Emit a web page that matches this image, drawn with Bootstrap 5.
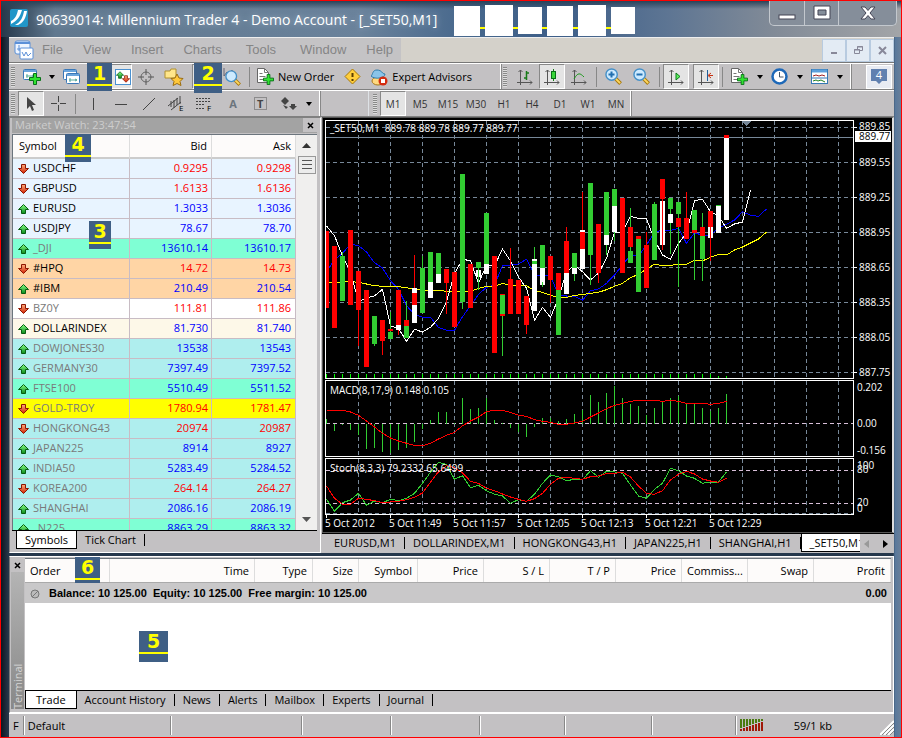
<!DOCTYPE html>
<html lang="en">
<head>
<meta charset="utf-8">
<meta name="viewport" content="width=device-width, initial-scale=1">
<title>Millennium Trader 4</title>
<link href="https://cdn.jsdelivr.net/npm/bootstrap@5.3.0/dist/css/bootstrap.min.css" rel="stylesheet">
<style>
:root{--face:#c3c1c3;--hi:#fff;--lo:#808080}
body{font:11px/16px "Open Sans","Noto Sans",sans-serif;color:#000;background:#14202e}
button{font:inherit;color:inherit;background:none;border:0;padding:0}
button svg{display:block;flex:none}
.shell{height:100vh;min-height:600px;border:1px solid red;padding:0 7px 0 8px;background:linear-gradient(90deg,#0f1620 0,#26384c 8px,#26384c calc(100% - 8px),#58789c calc(100% - 6px),#6a7f98 100%)}
.titlebar{height:36px;margin:0 -7px 0 -8px;padding-left:9px;background:linear-gradient(180deg,#2b4258 0,transparent 8px),linear-gradient(90deg,#26384a 0,#60788f 6%,#6a829b 40%,#46678c 52%,#3d5e88 62%,#5d7593 74%,#828b97 86%,#a3a5a8 100%)}
.caption-text{font-size:14px;line-height:22px;color:#fff;text-shadow:0 0 6px #9fb4c8}
.redacted{gap:5px;margin-left:17px;background:linear-gradient(#ff0,#ff0) 0 22px/100% 2px no-repeat}
.redacted span{background:#fff;width:26px;height:30px}
.redacted span:nth-child(3),.redacted span:nth-child(6){width:24px;height:27px}
.redacted span:nth-child(2),.redacted span:nth-child(5){width:28px;height:31px}
.win-btns{border:1px solid #c3c8ce;border-top:0;border-radius:0 0 5px 5px;height:25px;overflow:hidden;background:#858e9a}
.win-btns button{width:34px;display:flex;align-items:center;justify-content:center}
.win-btns button+button{border-left:1px solid #c3c8ce}
.win-btns button:last-child{width:58px}
.menus{height:26px;background:#d4d1ca;border-top:1px solid #eee;border-bottom:1px solid #777}
.menus nav{font:13px/24px "Liberation Sans",Arial,sans-serif;background:#c4c3c5;padding-left:5px}
.menus nav a{color:#858585;text-decoration:none}
.mdi button{width:24px;height:23px;background:#e3ebf4;border:1px solid #b8cbe0;display:flex;align-items:center;justify-content:center}
.tools{background:var(--face);border-top:1px solid var(--hi);border-bottom:1px solid var(--lo)}
.tool-group{border-right:1px solid var(--hi);box-shadow:1px 0 #888}
.tool-group button{height:25px;min-width:28px;display:flex;align-items:center;justify-content:center;flex:none}
.tool-group .drop{min-width:12px}
.tool-group .drop::after{content:"";border:3px solid transparent;border-top:4px solid #000;border-bottom:0}
.pressed{background:#e4e4e4;border:1px solid;border-color:#888 #fff #fff #888}
.tool-group .pressed{min-width:26px}
.tool-group .wide{padding-left:14px}
.grip{width:4px;height:20px;margin:0 3px 0 2px;background:repeating-linear-gradient(#888 0 1px,#ddd 1px 2px)}
.vsep{width:1px;height:20px;background:#888;margin:0 3px}
.frames button{font-size:10px;color:#333}
.feedback{width:26px;height:24px;background:#e8ebf2;border:1px solid #fff;margin-right:2px}
.main-row{min-height:0;background:var(--face)}
.watch{width:312px;margin-right:1px;border:1px solid var(--lo);border-right-color:#fff;border-bottom-color:#fff;padding:0 3px 3px 2px;background:var(--face)}
.watch-title{height:15px;line-height:14px;background:#a3a3a3;color:#cdcdcd;margin-bottom:1px;padding-left:3px}
.x-btn{height:14px;width:14px;display:flex;align-items:center;justify-content:center;background:var(--face)}
.grid-table{table-layout:fixed;width:100%;border-collapse:separate;border-spacing:0}
.quotes th{height:24px;font-weight:400;background:#fdfbfa;border-bottom:2px solid #ccc;border-right:1px solid #ddd;padding:0 4px 0 6px}
.quotes td{height:20px;line-height:18px;border-bottom:1px solid #c8bcc4;border-right:1px solid #c8bcc4;padding:0 3px 0 5px;white-space:nowrap;background:var(--row)}
.quotes td:last-child{padding-right:4px}
.down{color:red}.up{color:#00f}
.scroller{width:21px;flex:none;background:#f0efee}
.thumb{width:18px;height:18px;border:1px solid #999;background:#ececec;display:flex;align-items:center;justify-content:center}
.tabs-row{border-top:1px solid #000;background:var(--face)}
.tabs-row button{height:18px;padding-left:8px;display:flex;align-items:center;white-space:nowrap;flex:none}
.tabs-row button::after{content:"";height:12px;border-right:1px solid #000;margin-left:8px}
.tabs-row .current{background:#fff;border:1px solid #000;border-top:0;padding:0 8px}
.tabs-row .current::after{display:none}
.terminal .current{padding:0 10px}
.chart-box{background:#000;border:1px solid #555;border-right:2px solid #ddd;min-height:0}
.chart-box svg{display:block;width:100%;height:100%;shape-rendering:crispEdges}
.chart-box text{fill:#fff;font:10px "Open Sans","Noto Sans",sans-serif}
.chart-tabs{height:20px}
.chart-tabs .current{border-right:0;padding-right:0}
.terminal{border:1px solid var(--lo);border-color:#fff #fff #fff #777;background:var(--face);margin-top:3px;height:157px;padding:1px 2px 3px 0}
.side{width:15px}
.side-label{background:linear-gradient(#888,#b4b4b4);color:#d4d4d4;writing-mode:vertical-rl;transform:rotate(180deg);line-height:13px;width:13px;margin:0 1px 0}
.orders th{height:23px;font-weight:400;text-align:right;background:#fdfbfa;border-right:1px solid #ddd;padding:0 5px;white-space:nowrap}
.orders td{height:21px;background:#c9c8c9;border-top:1px solid #aaa;font:700 11px/16px "Liberation Sans",Arial,sans-serif;padding:0 4px 0 5px}
.statusbar{height:24px;background:var(--face);border-top:1px solid #fff;line-height:22px}
.statusbar>div{border-left:1px solid #888;box-shadow:inset 1px 0 #fff;padding-left:4px;height:19px;line-height:19px}
.marker{position:absolute;z-index:3;background:#3f5f85;color:#ff0;font:700 19px/21px "DejaVu Sans",sans-serif;text-align:center;width:25px;height:28px}
.marker::after{content:"";display:block;height:2px;background:#ff0}
.m1{left:78px;top:-1px}.m2{left:185px;top:-1px;width:28px;height:30px}
.m3{left:79px;top:103px;width:22px}.m4{left:55px;top:16px;width:26px}
.m5{left:114px;top:73px;width:29px;height:31px}.m6{left:50px;top:-1px;height:26px}
</style>
<script src="https://cdn.jsdelivr.net/npm/bootstrap@5.3.0/dist/js/bootstrap.bundle.min.js"></script>
</head>
<body>
<svg width="0" height="0" class="position-absolute" aria-hidden="true"><defs>
<linearGradient id="gg" x2="0" y2="1"><stop stop-color="#8f8"/><stop offset="1" stop-color="#0a8a1a"/></linearGradient>
<linearGradient id="gr" x2="0" y2="1"><stop stop-color="#ffb080"/><stop offset="1" stop-color="#d02000"/></linearGradient>
<symbol id="plus" viewBox="0 0 12 12"><path d="M4.500.500h3v4h4v3h-4v4h-3v-4h-4v-3h4z" fill="#2fe32f" stroke="#087018"/></symbol>
<symbol id="win" viewBox="0 0 14 11"><rect x=".5" y=".5" width="13" height="10" rx="1" fill="#fff" stroke="#3a78b8"/><path d="M1 2h12" stroke="#6aa5dc" stroke-width="2"/><path d="M3 7h8M4 5v4M9 6l2 1-2 1" stroke="#5a9" fill="none"/></symbol>
<symbol id="page" viewBox="0 0 12 15"><path d="M.5.5h7l4 4v10H.5z" fill="#fff" stroke="#666"/><path d="M7.500.500v4h4M2.500 5.500h3M2.500 8.500h6M2.500 11.500h5" stroke="#777" fill="none"/></symbol>
<symbol id="axes" viewBox="0 0 16 16"><path d="M3.500 1v15M0 13.500h15M1.500 3l2-2 2 2M13 11.500l2 2-2 2" stroke="#555" fill="none"/></symbol>
<symbol id="lens" viewBox="0 0 18 18"><path d="M11 11l5.500 5.500" stroke="#a87a10" stroke-width="4"/><path d="M11 11l5 5" stroke="#ffd860" stroke-width="2"/><circle cx="7" cy="7" r="6" fill="#cdeaff" stroke="#4590c8" stroke-width="1.500"/></symbol>
<symbol id="aup" viewBox="0 0 11 10"><path d="M5.500.500L10.500 5.500H7.500v4h-4v-4H.5z" fill="url(#gg)" stroke="#075c10"/></symbol>
<symbol id="adn" viewBox="0 0 11 10"><path d="M5.500 9.500L.5 4.500h3V.500h4v4h3z" fill="url(#gr)" stroke="#8c1400"/></symbol>
</defs></svg>

<div class="shell d-flex flex-column overflow-hidden">
<header class="titlebar d-flex align-items-start flex-shrink-0">
  <svg width="18" height="18" class="mt-2" viewBox="0 0 18 18"><rect width="18" height="18" rx="2" fill="#2196c8"/><path d="M1 12C5 10 7 6 8 1h4C10 8 7 12 1 15zM5 16c6-3 8-8 9-14h3c-1 7-4 12-9 14z" fill="#fff"/></svg>
  <div class="caption-text ms-2 mt-2">90639014: Millennium Trader 4 - Demo Account - [_SET50,M1]</div>
  <div class="redacted d-flex align-items-center mt-1"><span></span><span></span><span></span><span></span><span></span><span></span></div>
  <div class="win-btns d-flex ms-auto me-1">
    <button aria-label="Minimize"><svg width="18" height="16"><rect x="1" y="10" width="16" height="4" fill="#fff" stroke="#445"/></svg></button>
    <button aria-label="Maximize"><svg width="18" height="16"><path d="M1 1h16v13H1zM5 5v5h8V5z" fill="#fff" fill-rule="evenodd" stroke="#445"/></svg></button>
    <button aria-label="Close"><svg width="16" height="14"><path d="M1 1h4l3 3.500L11 1h4l-5 6 5 6h-4L8 9.500 5 13H1l5-6z" fill="#fff" stroke="#445"/></svg></button>
  </div>
</header>

<div class="menus d-flex align-items-center justify-content-between flex-shrink-0">
  <nav class="d-flex align-items-center">
    <svg width="20" height="20" viewBox="0 0 20 20"><rect x="1" y="1" width="15" height="13" rx="2" fill="#eef5ff" stroke="#5b90d8"/><path d="M1 3h15" stroke="#5b90d8" stroke-width="2"/><rect x="6" y="8" width="13" height="11" rx="1" fill="#fff" stroke="#5b90d8"/><path d="M3 9h3M5 5v6M8 12l2 4 2-4 2 4 3-3" fill="none" stroke="#5b90d8"/></svg>
    <a href="#" class="ms-2 me-3">File</a><a href="#" class="mx-1">View</a><a href="#" class="mx-3">Insert</a><a href="#" class="mx-1">Charts</a><a href="#" class="mx-3 px-1">Tools</a><a href="#" class="mx-1">Window</a><a href="#" class="ms-3 me-2">Help</a>
  </nav>
  <div class="mdi d-flex gap-0"><button aria-label="Minimize chart"><svg width="9" height="9"><path d="M1 7h6" stroke="#889" stroke-width="2"/></svg></button><button aria-label="Restore chart"><svg width="9" height="9"><path d="M3.500 3V.500h5v4H6M.500 3.500h5v4h-5zM3 1h6M0 4h6" fill="none" stroke="#889"/></svg></button><button aria-label="Close chart"><svg width="9" height="9"><path d="M1 1l7 7M8 1L1 8" stroke="#889" stroke-width="2"/></svg></button></div>
</div>

<div class="tools d-flex align-items-center flex-shrink-0 position-relative">
  <span class="marker m1">1</span><span class="marker m2">2</span>
  <div class="tool-group d-flex align-items-center pe-4">
    <i class="grip"></i>
    <button aria-label="New chart"><svg width="18" height="16"><use href="#win" width="14" height="11"/><use href="#plus" x="6" y="4" width="12" height="12"/></svg></button><button class="drop" aria-label="New chart list"></button>
    <button aria-label="Profiles"><svg width="18" height="16"><use href="#win" width="14" height="11"/><use href="#win" x="3" y="4" width="14" height="11"/></svg></button>
    <button class="pressed wide ms-1" aria-label="Market Watch"><svg width="26" height="16"><rect x="10.500" y=".5" width="15" height="15" fill="#fff" stroke="#4a90d0"/><use href="#aup" x="11" y="2" width="8" height="8"/><use href="#adn" x="17" y="6" width="8" height="8"/></svg></button>
    <button aria-label="Data window"><svg width="16" height="16"><circle cx="8" cy="8" r="5" fill="none" stroke="#666"/><path d="M8 0v6M8 10v6M0 8h6M10 8h6" stroke="#555"/></svg></button>
    <button aria-label="Navigator"><svg width="20" height="18"><path d="M1 3h5l1-2h5v9H1z" fill="#ffe68a" stroke="#b09030"/><path d="M13 6l2 4 4 .5-3 3 1 4-4-2-4 2 1-4-3-3 4-.5z" fill="#ffc83c" stroke="#9a6c10"/></svg></button>
    <button class="pressed ms-1" aria-label="Terminal"></button>
    <button aria-label="Strategy tester"><svg width="18" height="18"><path d="M1 0v8l3-4 2 4 3-6v7" stroke="#667" fill="none"/><use href="#lens" x="2" y="2" width="16" height="16"/></svg></button>
    <i class="vsep"></i>
    <button class="px-1"><svg width="17" height="17" class="me-1"><use href="#page" width="12" height="15"/><use href="#plus" x="6" y="6" width="11" height="11"/></svg>New Order</button>
    <button aria-label="Warnings"><svg width="17" height="17"><path d="M8.500 1L16 8.500 8.500 16 1 8.500z" fill="#ffce3c" stroke="#a87808"/><path d="M8.500 5v4M8.500 11v2" stroke="#5a3c00" stroke-width="2"/></svg></button>
    <button class="px-1"><svg width="18" height="18" class="me-1"><ellipse cx="8" cy="13" rx="6" ry="4" fill="#ffd980" stroke="#a87818"/><path d="M1 8c2-1 1-6 6-6s5 4 8 4c0 4-10 6-14 2z" fill="#8ac4e8" stroke="#2f7cac"/><circle cx="13" cy="13" r="4.500" fill="#d42c10"/><rect x="11" y="11" width="4" height="4" fill="#fff"/></svg>Expert Advisors</button>
  </div>
  <div class="tool-group d-flex align-items-center pe-1">
    <i class="grip me-1"></i>
    <button aria-label="Bar chart"><svg width="16" height="16"><use href="#axes" width="16" height="16"/><path d="M9.500 2v9M7 9h2M10 4h2" stroke="#177a17" stroke-width="1.500"/></svg></button>
    <button class="pressed" aria-label="Candlesticks"><svg width="16" height="16"><use href="#axes" width="16" height="16"/><path d="M9.500 0v12" stroke="#177a17"/><rect x="7.500" y="2.500" width="4" height="7" fill="#3ad63a" stroke="#087018"/></svg></button>
    <button aria-label="Line chart"><svg width="16" height="16"><use href="#axes" width="16" height="16"/><path d="M3 10c4-7 6-6 10-2" fill="none" stroke="#1c9a1c"/></svg></button>
    <i class="vsep"></i>
    <button aria-label="Zoom in"><svg width="17" height="17"><use href="#lens" width="17" height="17"/><path d="M3.500 6.500h6M6.500 3.500v6" stroke="#2270b0" stroke-width="2"/></svg></button>
    <button aria-label="Zoom out"><svg width="17" height="17"><use href="#lens" width="17" height="17"/><path d="M3.500 6.500h6" stroke="#2270b0" stroke-width="2"/></svg></button>
    <i class="vsep"></i>
    <button class="pressed me-1" aria-label="Auto scroll"><svg width="16" height="16"><use href="#axes" width="16" height="16"/><path d="M8 4l4 3.500L8 11z" fill="#5cf05c" stroke="#0a7a1a"/></svg></button><button class="pressed" aria-label="Chart shift"><svg width="16" height="16"><use href="#axes" width="16" height="16"/><path d="M9.500 1v11" stroke="#1f5f9a"/><path d="M15 6.500h-4M13 4l-3 2.500L13 9" stroke="#c83010" fill="none"/></svg></button>
    <i class="vsep"></i>
    <button aria-label="Indicators"><svg width="17" height="17"><use href="#page" width="12" height="15"/><use href="#plus" x="6" y="6" width="11" height="11"/></svg></button><button class="drop" aria-label="Indicator list"></button>
    <button aria-label="Periods"><svg width="17" height="17"><circle cx="8.500" cy="8.500" r="7" fill="#fff" stroke="#1d68b8" stroke-width="2.500"/><path d="M8.500 4v5h4" fill="none" stroke="#456"/></svg></button><button class="drop" aria-label="Period list"></button>
    <button aria-label="Templates"><svg width="17" height="15"><rect x=".5" y=".5" width="16" height="14" fill="#fff" stroke="#3478b4"/><path d="M1 2h15" stroke="#5ba0dc" stroke-width="3"/><path d="M2 7l3-1 3 1 3-1 3 1" stroke="#a02020" fill="none"/><path d="M1 9h15" stroke="#3478b4"/><path d="M2 12l3-1 2 1 3-1 4 2" stroke="#208020" fill="none"/></svg></button><button class="drop" aria-label="Template list"></button>
  </div>
  <button class="feedback ms-auto d-flex align-items-center justify-content-center" aria-label="4 messages"><svg width="18" height="17"><path d="M1 1h16v12h-5l-3 3-3-3H1z" fill="#6080b0"/><text x="9" y="11" text-anchor="middle" fill="#fff" font-size="11">4</text></svg></button>
</div>

<div class="tools d-flex align-items-center flex-shrink-0">
  <div class="tool-group d-flex align-items-center">
    <i class="grip"></i>
    <button class="pressed" aria-label="Cursor"><svg width="12" height="16"><path d="M2 1v12l3-3 2 5 2-1-2-5h4z" fill="#444"/></svg></button>
    <button aria-label="Crosshair"><svg width="15" height="15"><path d="M7.500 0v6M7.500 9v6M0 7.500h6M9 7.500h6" stroke="#444"/></svg></button>
    <i class="vsep"></i>
    <button aria-label="Vertical line"><svg width="14" height="14"><path d="M7.500 1v12" stroke="#444"/></svg></button>
    <button aria-label="Horizontal line"><svg width="14" height="14"><path d="M1 7.500h12" stroke="#444"/></svg></button>
    <button aria-label="Trendline"><svg width="14" height="14"><path d="M1 13L13 1" stroke="#444"/></svg></button>
    <button aria-label="Channel"><svg width="18" height="20"><path d="M0 12L10 4M3 16l10-8M3 7v6M6 6v8M9 4v7M12 2v8" stroke="#444" fill="none"/><text x="11" y="17" font-size="8">E</text></svg></button>
    <button aria-label="Fibonacci"><svg width="18" height="20"><path d="M0 4.500h15M0 7.500h15M0 10.500h9M0 14.500h9" stroke="#444" stroke-dasharray="2 1"/><text x="11" y="17" font-size="8">F</text></svg></button>
    <button aria-label="Text" class="text-secondary"><b>A</b></button>
    <button aria-label="Text label"><svg width="14" height="14"><rect x=".5" y=".5" width="12" height="12" fill="none" stroke="#555" stroke-dasharray="1 1"/><text x="3" y="11" font-weight="700" font-size="11" fill="#444">T</text></svg></button>
    <button aria-label="Arrows"><svg width="16" height="14"><path d="M4 0l4 4-4 4-4-4zM12 13L8 9h2V7h4v2h2zM2 8l3 4 2-2" fill="#444"/></svg></button>
    <button class="drop me-1" aria-label="Arrow list"></button>
  </div>
  <div class="tool-group frames d-flex align-items-center ms-5 border-start">
    <i class="grip ms-1"></i>
    <button class="pressed">M1</button><button>M5</button><button>M15</button><button>M30</button><button>H1</button><button>H4</button><button>D1</button><button>W1</button><button>MN</button>
  </div>
</div>

<main class="main-row d-flex flex-grow-1">
  <section class="watch d-flex flex-column position-relative flex-shrink-0">
    <span class="marker m4">4</span><span class="marker m3">3</span>
    <div class="watch-title d-flex justify-content-between"><span>Market Watch: 23:47:54</span><button class="x-btn" aria-label="Close Market Watch"><svg width="7" height="7"><path d="M1 1l5 5M6 1L1 6" stroke="#000" stroke-width="1.500"/></svg></button></div>
    <div class="d-flex flex-grow-1 overflow-hidden border border-secondary border-end-0 border-bottom-0">
      <div class="flex-grow-1"><table class="grid-table quotes"><colgroup><col><col width="82"><col width="84"></colgroup><thead><tr><th>Symbol</th><th class="text-end">Bid</th><th class="text-end">Ask</th></tr></thead><tbody id="quotes"></tbody></table></div>
      <div class="scroller d-flex flex-column align-items-center"><svg width="9" height="5" class="mt-2 mb-1"><path d="M0 5l4.500-5L9 5z" fill="#333"/></svg><div class="thumb mt-1"><svg width="10" height="10"><path d="M0 .5h10M0 4.500h10M0 8.500h10" stroke="#555"/></svg></div><svg width="9" height="5" class="mt-auto mb-2"><path d="M0 0h9L4.500 5z" fill="#555"/></svg></div>
    </div>
    <div class="tabs-row d-flex ps-1"><button class="current">Symbols</button><button>Tick Chart</button></div>
  </section>
  <section class="d-flex flex-column flex-grow-1 overflow-hidden">
    <div class="chart-box flex-grow-1"><svg id="chart" role="img" aria-label="_SET50,M1 chart"></svg></div>
    <div class="tabs-row chart-tabs d-flex ps-1"><button>EURUSD,M1</button><button>DOLLARINDEX,M1</button><button>HONGKONG43,H1</button><button>JAPAN225,H1</button><button>SHANGHAI,H1</button><button class="current flex-shrink-1 flex-grow-1 overflow-hidden">_SET50,M1</button><span class="d-flex gap-1 px-1 align-items-center"><svg width="6" height="8"><path d="M5 0v8L0 4z" fill="#999"/></svg><svg width="16" height="8"><path d="M9 0v8l5-4z" fill="#000"/></svg></span></div>
  </section>
</main>

<section class="terminal d-flex flex-shrink-0">
  <div class="side d-flex flex-column"><button class="x-btn" aria-label="Close Terminal"><svg width="7" height="7"><path d="M1 1l5 5M6 1L1 6" stroke="#000" stroke-width="1.500"/></svg></button><div class="side-label flex-grow-1">Terminal</div></div>
  <div class="flex-grow-1 d-flex flex-column position-relative">
    <span class="marker m6">6</span><span class="marker m5">5</span>
    <div class="flex-grow-1 bg-white border-top border-secondary">
      <table class="grid-table orders"><colgroup><col width="85"><col><col width="58"><col width="46"><col width="59"><col width="66"><col width="66"><col width="66"><col width="66"><col width="66"><col width="66"><col width="77"></colgroup>
      <thead><tr><th class="text-start">Order</th><th>Time</th><th>Type</th><th>Size</th><th>Symbol</th><th>Price</th><th>S / L</th><th>T / P</th><th>Price</th><th>Commiss...</th><th>Swap</th><th>Profit</th></tr></thead>
      <tbody><tr><td colspan="11"><svg width="11" height="11" class="me-2"><circle cx="5" cy="5" r="4" fill="#bbb" stroke="#777"/><path d="M2 8l6-6" stroke="#777"/></svg>Balance: 10 125.00&nbsp; Equity: 10 125.00&nbsp; Free margin: 10 125.00</td><td class="text-end">0.00</td></tr></tbody></table>
    </div>
    <div class="tabs-row d-flex"><button class="current">Trade</button><button>Account History</button><button>News</button><button>Alerts</button><button>Mailbox</button><button>Experts</button><button>Journal</button></div>
  </div>
</section>

<footer class="statusbar d-flex align-items-center flex-shrink-0">
  <span class="px-1">F</span>
  <div style="width:147px">Default</div><div style="width:131px"></div><div style="width:89px"></div><div style="width:89px"></div><div style="width:85px"></div><div style="width:87px"></div><div style="width:84px"></div>
  <div class="flex-grow-1 d-flex align-items-center"><svg width="24" height="13" id="meter"></svg><span class="ms-auto me-5">59/1 kb</span><svg width="14" height="18" class="align-self-end"><path d="M0 18L14 4M4 18L14 8M8 18l6-6" stroke="#fff" stroke-width="2"/><path d="M2 18L14 6M6 18l8-8M10 18l4-4" stroke="#888"/></svg></div>
</footer>
</div>

<script>
const C={b:'#e8f4ff',t:'#7fffd4',o:'#ffd5a5',w:'#fff',c:'#fdf8e8',a:'#afeeee',y:'#ff0'};
const Q=`USDCHF 0.9295 0.9298 d b 1
GBPUSD 1.6133 1.6136 d b 1
EURUSD 1.3033 1.3036 u b 1
USDJPY 78.67 78.70 u b 1
_DJI 13610.14 13610.17 u t 0
#HPQ 14.72 14.73 d o 1
#IBM 210.49 210.54 u o 1
BZ0Y 111.81 111.86 d w 0
DOLLARINDEX 81.730 81.740 u c 1
DOWJONES30 13538 13543 u a 0
GERMANY30 7397.49 7397.52 u a 0
FTSE100 5510.49 5511.52 u t 0
GOLD-TROY 1780.94 1781.47 d y 0
HONGKONG43 20974 20987 d a 0
JAPAN225 8914 8927 u a 0
INDIA50 5283.49 5284.52 u a 0
KOREA200 264.14 264.27 d a 0
SHANGHAI 2086.16 2086.19 u a 0
_N225 8863.29 8863.32 u t 0`;
document.getElementById('quotes').innerHTML=Q.split('\n').map(r=>{const[s,b,a,d,c,k]=r.split(' ');const n=d=='d'?'down':'up';
return `<tr style="--row:${C[c]}"><td style="color:${k=='1'?'#000':'#7a7a7a'}"><svg width="11" height="10" class="me-1"><use href="#${d=='d'?'adn':'aup'}"/></svg>${s}</td><td class="text-end ${n}">${b}</td><td class="text-end ${n}">${a}</td></tr>`}).join('');

const X=i=>326.5+8*i, P=v=>115+v/3, S=v=>375+v/3;
const line=(a,f,c)=>`<polyline fill="none" stroke="${c}" points="${a.map((v,i)=>X(i)+','+f(v).toFixed(1)).join(' ')}"/>`;
const seg=(x1,y1,x2,y2,c,d)=>`<path d="M${x1} ${y1}L${x2} ${y2}" stroke="${c}"${d?` stroke-dasharray="${d}"`:''}/>`;
const txt=(x,y,s,c)=>`<text x="${x}" y="${y}"${c?` style="fill:${c}"`:''}>${s}</text>`;
const K={R:'red',G:'#32cd32',W:'#fff'};
/* Candle parts by colour and span; lower-case letters are wicks. */
const candles=`R348-578|R393-639|g411-558 G423-558|R345-570|r585-693 R468-585|R525-756|g603-693 G603-687|r615-720 R615-678|g591-651 R642-648 G651-672|r525-660 R525-630 W630-645|g558-669 R615-633 G633-669|r420-520 W519-534 R534-570 W570-624|g423-594 G459-594|G411-501 W501-549|G414-477 W477-504|r462-597 R462-504|R471-636|g177-582 G177-561|R447-579|G441-459 W465-486 g441-525|G294-447 W447-477|R423-714|g537-723 R537-603 G540-597|r399-597 R492-597|R495-597|r543-657 R543-630|g396-432 W432-588 G438-447|G390-459 W459-510 g500-516|r423-564 R423-495|R474-525 G525-660|r336-474 R378-474 W474-537|g414-498 G414-459 W459-477|r231-345 W345-351 R351-402 W402-462|g204-510 G204-420|r327-504 R327-474|g231-420 G231-360 W360-390|g222-378 G222-273 W273-351|R249-474|g279-444 R336-396 G408-444|R363-372 G372-531|r351-519 R390-519|g261-435 G267-435|R192-252 W258-390 r252-405|g249-417 G249-282 W297-324|g261-516 G261-297 R309-336|r231-372 R309-372|g285-495 G285-345 R345-354|g294-498 R336-363 G363-432|R288-336 W336-369 r336-438|G270-273 W273-354|R60-69 W69-315`.split('|');
const white=[333,362,423,470,560,548,543,523,633,640,679,643,651,637,610,560,475,433,437,505,450,453,402,438,486,520,616,577,607,550,470,450,470,495,474,430,351,351,304,310,311,375,420,433,385,355,257,253,290,302,340,327,321,226];
const blue=[470,435,415,387,392,411,443,459,497,523,572,597,607,607,637,646,646,605,573,538,517,510,452,450,447,433,480,480,483,540,543,543,556,527,522,505,480,450,420,423,390,352,345,346,340,385,354,360,360,340,328,315,290,301,304,282];
const yellow=[503,503,500,500,502,507,512,514,514,515,518,522,525,526,526,529,529,530,529,520,514,514,505,511,511,512,527,532,541,547,547,541,539,535,532,524,514,505,488,478,462,448,452,451,448,448,436,438,427,418,420,405,396,384,372,351];
const hist=[132,168,150,165,180,222,219,231,233,225,219,201,163,135,111,111,145,69,102,99,69,135,145,159,171,186,156,129,129,138,132,117,105,60,81,54,33,69,87,93,120,99,81,69,63,87,87,99,108,99,57];
const signal=[106,106,106,111,121,138,156,175,189,198,205,211,212,205,192,181,172,152,138,126,110,106,106,112,121,124,134,139,142,148,148,144,139,126,114,101,91,85,79,76,76,76,79,76,79,85,85,85,88,85,79];
const stK=[373,409,383,375,355,391,378,383,373,377,370,355,325,292,262,268,313,302,338,331,347,358,363,385,374,379,358,325,300,305,317,313,314,287,307,289,291,295,330,363,370,343,325,280,287,303,310,325,321,321,291];
const stD=[333,370,388,388,370,373,377,383,381,379,374,367,354,322,290,272,278,294,319,325,340,347,357,366,373,379,371,355,328,310,307,310,313,305,303,296,295,292,306,333,355,358,347,315,298,289,297,312,318,322,310];
let o='<defs><clipPath id="cp"><rect x="326" y="118" width="528" height="400"/></clipPath></defs><g transform="translate(-323 -118)"><g clip-path="url(#cp)">';
for(let k=0;k<16;k++){const x=358.5+32*k;[[121,378],[381,456],[459,514]].forEach(([a,b])=>o+=seg(x,a,x,b,'#778899','4 3'));}
for(let k=0;k<8;k++)o+=seg(326,127.5+35*k,853,127.5+35*k,'#778899','4 3');
o+=seg(326,137.5,853,137.5,'#778899');
o+=seg(326,423.5,853,423.5,'#d8bfd8','4 3')+seg(326,470.5,853,470.5,'#d8bfd8','4 3')+seg(326,503.5,853,503.5,'#d8bfd8','4 3')+seg(326,513.5,853,513.5,'#778899','4 3');
o+='<path d="M741 121h10l-5 5z" fill="#778899"/>';
o+=line(blue,P,'#00f')+line(yellow,P,'#ff0')+line(white,P,'#fff');
candles.forEach((c,i)=>{c.split(' ').forEach(p=>{const u=p[0].toUpperCase(),w=u==p[0]?5:1,[a,b]=p.slice(1).split('-').map(Number);o+=`<rect x="${X(i)-w/2}" y="${P(a)}" width="${w}" height="${(b-a)/3}" fill="${K[u]}"/>`});
o+=seg(X(i),i>48?376:374,X(i),378,'#0f0');o+=seg(X(i),423.5,X(i),S(hist[i]),'#32cd32')});
o+=line(signal,S,'red')+line(stK,S,'#32cd32')+line(stD,S,'red')+'</g>';
[[120,378],[380,456],[458,514]].forEach(([a,b])=>o+=`<rect x="325.500" y="${a+.5}" width="528" height="${b-a}" fill="none" stroke="#fff"/>`);
['889.85','889.55','889.25','888.95','888.65','888.35','888.05','887.75'].forEach((s,k)=>{o+=seg(853,127.5+35*k,857,127.5+35*k,'#fff')+txt(859,(k?131:130)+35*k,s)});
o+='<rect x="855" y="131" width="36" height="11" fill="#fff"/>'+txt(859,140,'889.77','#000');
o+=txt(857,391,'0.202')+txt(857,427,'0.00')+txt(857,454,'-0.156')+txt(857,469,'100')+txt(857,473,'80')+txt(857,506,'20')+txt(857,512,'0');
o+=txt(330,132,'_SET50,M1&#160; 889.78 889.78 889.77 889.77')+txt(330,394,'MACD(8,17,9) 0.148 0.105')+txt(330,472,'Stoch(8,3,3) 79.2332 65.6499');
['5 Oct 2012','5 Oct 11:49','5 Oct 11:57','5 Oct 12:05','5 Oct 12:13','5 Oct 12:21','5 Oct 12:29'].forEach((s,k)=>{o+=seg(326.5+64*k,514,326.5+64*k,518,'#fff')+txt(325+64*k,527,s)});
document.getElementById('chart').innerHTML=o+'</g>';
let m='';for(let i=0;i<8;i++)m+=`<rect x="${i*3}" y="0" width="2" height="${9-i}" fill="#4a7a10"/><rect x="${i*3}" y="${10-i}" width="2" height="${2+i}" fill="#a01808"/>`;
document.getElementById('meter').innerHTML=m;
</script>
</body>
</html>
